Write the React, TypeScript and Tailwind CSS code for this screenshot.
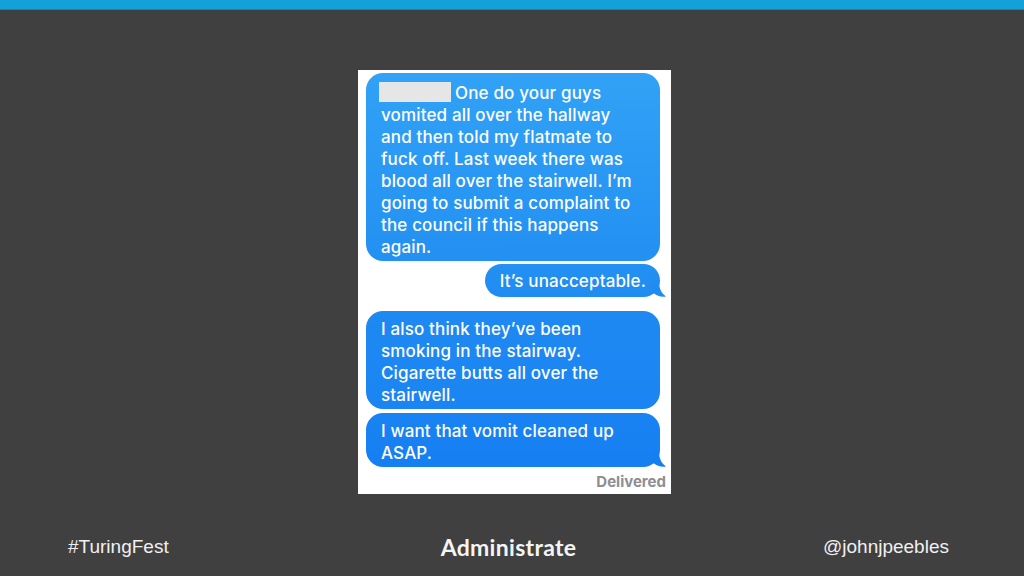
import type { ReactNode } from "react";

const bubbleFont = { fontFamily: "Inter, 'Noto Sans', sans-serif" };

function Tail({ color }: { color: string }) {
  return (
    <svg
      className="absolute -right-[6px] bottom-0"
      width="14"
      height="16"
      viewBox="0 0 14 16"
      fill={color}
    >
      <path d="M0 0 L7 0 C7 7 9 12 14 15.5 C9 16.2 5 15 2 12.5 L0 12 Z" />
    </svg>
  );
}

function Bubble({
  children,
  from,
  to,
  tail,
  className = "",
}: {
  children: ReactNode;
  from: string;
  to: string;
  tail?: boolean;
  className?: string;
}) {
  return (
    <div
      className={`relative rounded-[17px] pl-[15px] text-white text-[17px] font-medium leading-[22px] tracking-[0.15px] ${className}`}
      style={{ background: `linear-gradient(to bottom, ${from}, ${to})`, ...bubbleFont }}
    >
      {children}
      {tail && <Tail color={to} />}
    </div>
  );
}

export default function App() {
  return (
    <div className="w-[1024px] h-[576px] bg-[#404040] flex flex-col overflow-hidden">
      <div className="h-[10px] bg-[#14a1d9] border-b border-[#2c7a9c] shrink-0" />

      <div className="mt-[60px] ml-[358px] w-[313px] h-[424px] bg-white flex flex-col px-[8px] pr-[11px] pt-[3px]">
        <Bubble from="#31a2f6" to="#2390f2" className="h-[188px] pt-[9px] pr-[20px]">
          <span className="inline-block align-[-3px] w-[72px] h-[20px] bg-[#e6e6e6] mr-[4px] -ml-[2px]" />
          One do your guys vomited all over the hallway and then told my flatmate to fuck off. Last week there was blood all over the stairwell. I’m going to submit a complaint to the council if this happens again.
        </Bubble>
        <Bubble from="#2390f2" to="#208cf2" tail className="self-end mt-[3px] h-[33px] pt-[6px] pl-[12px] pr-[14px]">
          It’s unacceptable.
        </Bubble>
        <Bubble from="#1f89f2" to="#1a84f2" className="mt-[14px] h-[98px] pt-[7px] pr-[20px]">
          I also think they’ve been smoking in the stairway. Cigarette butts all over the stairwell.
        </Bubble>
        <Bubble from="#1a83f2" to="#157ff2" tail className="mt-[4px] h-[54px] pt-[7px] pr-[20px]">
          I want that vomit cleaned up ASAP.
        </Bubble>
        <div
          className="self-end -mr-[6px] mt-[4px] text-[15px] font-bold text-[#8e8e93]"
          style={bubbleFont}
        >
          Delivered
        </div>
      </div>

      <div
        className="mt-[36px] grid grid-cols-3 items-center px-[68px] pr-[75px] text-[#f0f0f0] text-[19px]"
        style={{ fontFamily: "'Liberation Sans', Arial, sans-serif" }}
      >
        <span className="justify-self-start">#TuringFest</span>
        <span
          className="justify-self-center text-[23px] font-bold tracking-[0.3px] text-[#f4f4f4]"
          style={{ fontFamily: "Lato, sans-serif" }}
        >
          Administrate
        </span>
        <span className="justify-self-end">@johnjpeebles</span>
      </div>
    </div>
  );
}
